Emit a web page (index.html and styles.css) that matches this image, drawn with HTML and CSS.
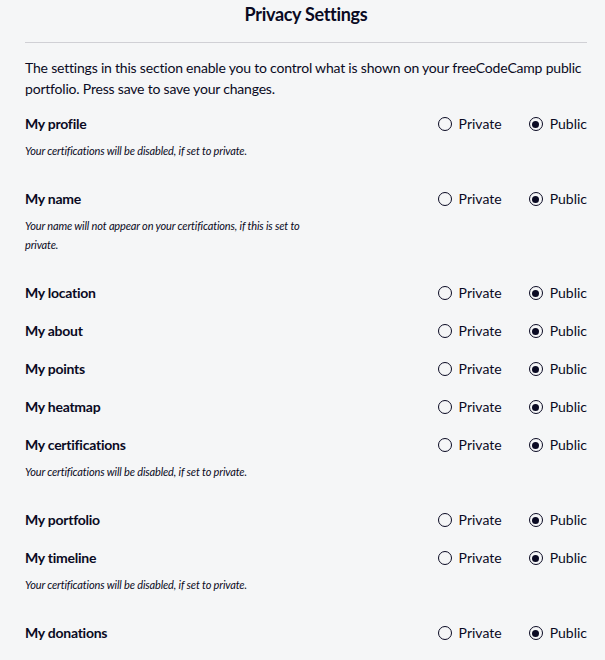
FILE: index.html
```html
<!DOCTYPE html>
<html lang="en">
<head>
<meta charset="utf-8">
<title>Privacy Settings</title>
<link rel="stylesheet" href="styles.css">
</head>
<body>
<section class="privacy">
  <h2 class="title">Privacy Settings</h2>
  <hr class="divider">
  <p class="intro">The settings in this section enable you to control what is shown on your freeCodeCamp public portfolio. Press save to save your changes.</p>

  <div class="setting">
    <div class="info">
      <div class="label">My profile</div>
      <p class="desc">Your certifications will be disabled, if set to private.</p>
    </div>
    <div class="radios"><span class="opt"><span class="radio"></span>Private</span><span class="opt"><span class="radio checked"></span>Public</span></div>
  </div>

  <div class="setting">
    <div class="info">
      <div class="label">My name</div>
      <p class="desc">Your name will not appear on your certifications, if this is set to private.</p>
    </div>
    <div class="radios"><span class="opt"><span class="radio"></span>Private</span><span class="opt"><span class="radio checked"></span>Public</span></div>
  </div>

  <div class="setting">
    <div class="info"><div class="label">My location</div></div>
    <div class="radios"><span class="opt"><span class="radio"></span>Private</span><span class="opt"><span class="radio checked"></span>Public</span></div>
  </div>

  <div class="setting">
    <div class="info"><div class="label">My about</div></div>
    <div class="radios"><span class="opt"><span class="radio"></span>Private</span><span class="opt"><span class="radio checked"></span>Public</span></div>
  </div>

  <div class="setting">
    <div class="info"><div class="label">My points</div></div>
    <div class="radios"><span class="opt"><span class="radio"></span>Private</span><span class="opt"><span class="radio checked"></span>Public</span></div>
  </div>

  <div class="setting">
    <div class="info"><div class="label">My heatmap</div></div>
    <div class="radios"><span class="opt"><span class="radio"></span>Private</span><span class="opt"><span class="radio checked"></span>Public</span></div>
  </div>

  <div class="setting">
    <div class="info">
      <div class="label">My certifications</div>
      <p class="desc">Your certifications will be disabled, if set to private.</p>
    </div>
    <div class="radios"><span class="opt"><span class="radio"></span>Private</span><span class="opt"><span class="radio checked"></span>Public</span></div>
  </div>

  <div class="setting">
    <div class="info"><div class="label">My portfolio</div></div>
    <div class="radios"><span class="opt"><span class="radio"></span>Private</span><span class="opt"><span class="radio checked"></span>Public</span></div>
  </div>

  <div class="setting">
    <div class="info">
      <div class="label">My timeline</div>
      <p class="desc">Your certifications will be disabled, if set to private.</p>
    </div>
    <div class="radios"><span class="opt"><span class="radio"></span>Private</span><span class="opt"><span class="radio checked"></span>Public</span></div>
  </div>

  <div class="setting">
    <div class="info"><div class="label">My donations</div></div>
    <div class="radios"><span class="opt"><span class="radio"></span>Private</span><span class="opt"><span class="radio checked"></span>Public</span></div>
  </div>
</section>
</body>
</html>
```

FILE: styles.css
```css
html, body {
  margin: 0;
  padding: 0;
  background: #f5f6f7;
}

body {
  font-family: Lato, "Noto Sans", sans-serif;
  color: #0a0a23;
}

.privacy {
  padding: 0 18px 0 25px;
}

.title {
  margin: 0;
  font-size: 18px;
  font-weight: 700;
  letter-spacing: -0.3px;
  line-height: 28px;
  text-align: center;
}

.divider {
  margin: 14px 0 0 0;
  border: 0;
  border-top: 1px solid #d0d0d5;
  height: 0;
}

.intro {
  margin: 14px 0 14px 0;
  font-size: 14px;
  letter-spacing: -0.2px;
  line-height: 21px;
}

.setting {
  display: flex;
  justify-content: space-between;
  align-items: flex-start;
  margin-bottom: 16px;
}

.info {
  max-width: 290px;
}

.label {
  font-size: 14px;
  font-weight: 700;
  letter-spacing: -0.25px;
  line-height: 22px;
}

.desc {
  margin: 6px 0 12px 0;
  font-size: 11px;
  font-style: italic;
  letter-spacing: -0.15px;
  line-height: 19px;
}

.radios {
  display: flex;
  gap: 27px;
  height: 22px;
  align-items: center;
}

.opt {
  display: flex;
  align-items: center;
  gap: 7px;
  font-size: 14px;
  line-height: 22px;
}

.radio {
  box-sizing: border-box;
  width: 14px;
  height: 14px;
  border: 1.5px solid #0a0a23;
  border-radius: 50%;
  display: flex;
  align-items: center;
  justify-content: center;
}

.radio.checked::after {
  content: "";
  width: 7px;
  height: 7px;
  border-radius: 50%;
  background: #0a0a23;
}
```
